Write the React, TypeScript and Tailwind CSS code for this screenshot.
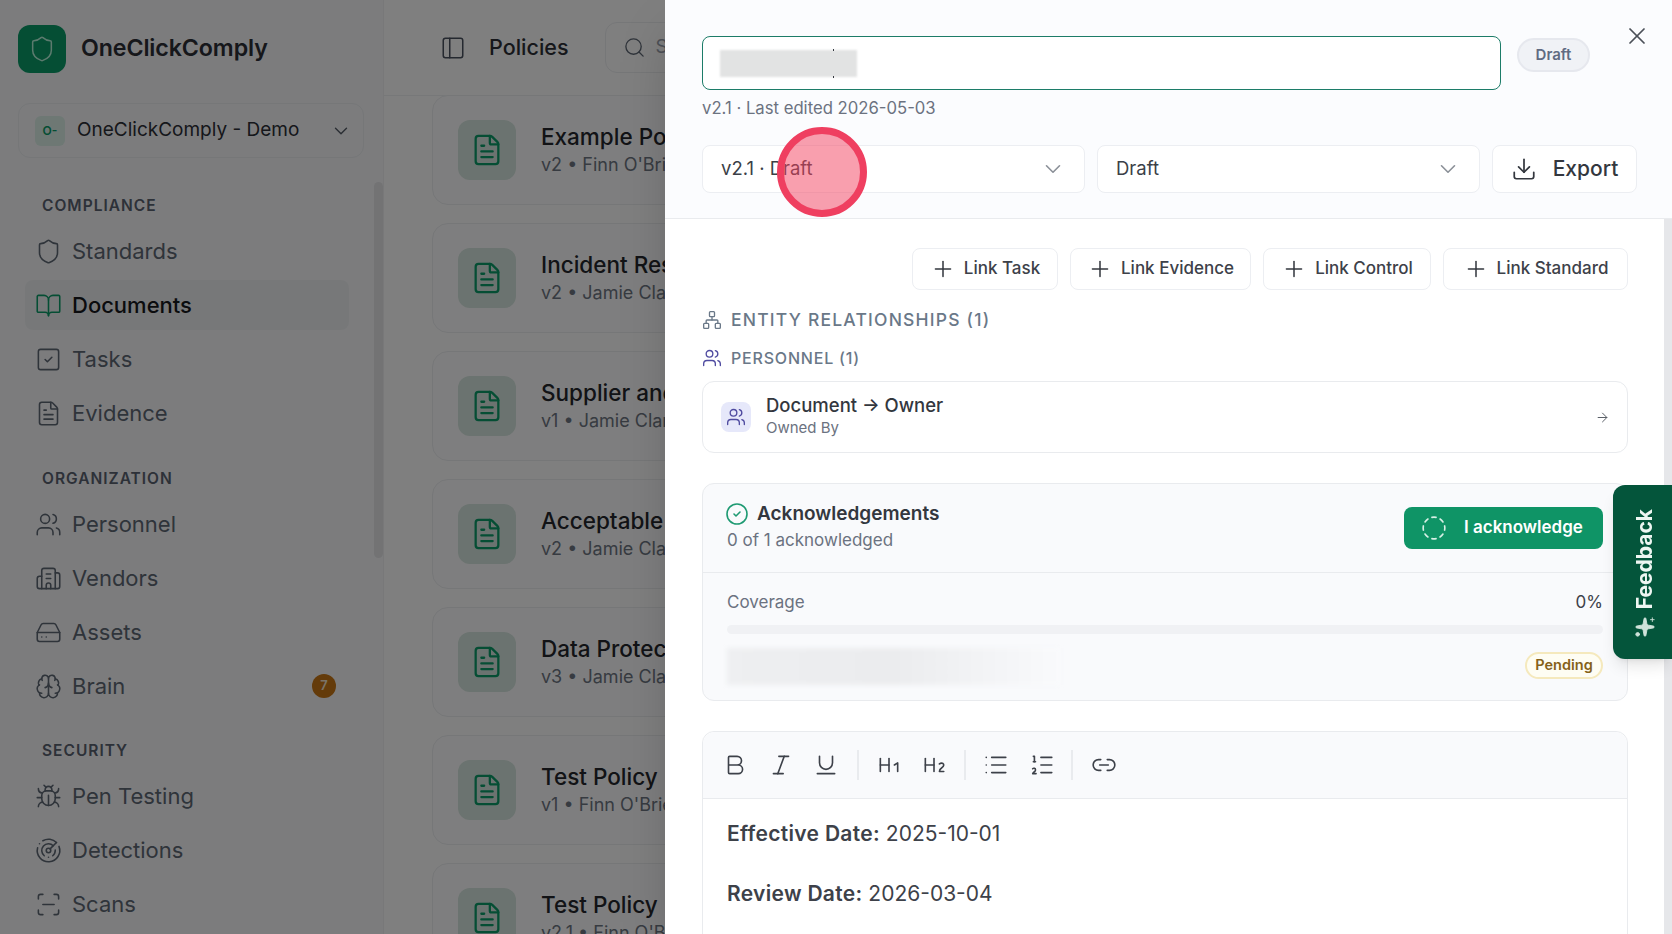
import React from "react";
import {
  ArrowRight,
  Bold,
  BookOpen,
  Bug,
  Building2,
  ChevronDown,
  CircleCheck,
  CircleDashed,
  Download,
  FileText,
  Brain,
  HardDrive,
  Heading1,
  Heading2,
  Italic,
  Link2,
  List,
  ListOrdered,
  Network,
  PanelLeft,
  Plus,
  Radar,
  ScanLine,
  Search,
  Shield,
  Sparkles,
  SquareCheck,
  Underline,
  Users,
  X,
} from "lucide-react";

const sections = [
  {
    label: "COMPLIANCE",
    labelClass: "mt-[38px]",
    items: [
      { name: "Standards", icon: Shield },
      { name: "Documents", icon: BookOpen, active: true },
      { name: "Tasks", icon: SquareCheck },
      { name: "Evidence", icon: FileText },
    ],
  },
  {
    label: "ORGANIZATION",
    labelClass: "mt-[31px]",
    items: [
      { name: "Personnel", icon: Users },
      { name: "Vendors", icon: Building2 },
      { name: "Assets", icon: HardDrive },
      { name: "Brain", icon: Brain, badge: "7" },
    ],
  },
  {
    label: "SECURITY",
    labelClass: "mt-[30px]",
    items: [
      { name: "Pen Testing", icon: Bug },
      { name: "Detections", icon: Radar },
      { name: "Scans", icon: ScanLine },
    ],
  },
];

const policies = [
  { title: "Example Policy", meta: "v2 • Finn O'Brien" },
  { title: "Incident Response Plan", meta: "v2 • Jamie Clark" },
  { title: "Supplier and Vendor Policy", meta: "v1 • Jamie Clark" },
  { title: "Acceptable Use Policy", meta: "v2 • Jamie Clark" },
  { title: "Data Protection Policy", meta: "v3 • Jamie Clark" },
  { title: "Test Policy", meta: "v1 • Finn O'Brien" },
  { title: "Test Policy", meta: "v2.1 • Finn O'Brien" },
];

const links = [
  { label: "Link Task", width: "w-[146px]" },
  { label: "Link Evidence", width: "w-[181px]" },
  { label: "Link Control", width: "w-[168px]" },
  { label: "Link Standard", width: "w-[185px]" },
];

const Sidebar: React.FC = () => (
  <aside className="relative w-[384px] shrink-0 border-r border-[#f0f1f3] bg-[#f8f9fb]">
    <div className="flex h-[96px] items-center gap-[15px] pl-[18px] pt-[1px]">
      <div className="flex h-[48px] w-[48px] items-center justify-center rounded-xl bg-[#0a9c68]">
        <Shield className="h-[28px] w-[28px] text-[#b8f5dc]" strokeWidth={1.3} />
      </div>
      <span className="text-[23.2px] font-semibold tracking-[-0.1px] text-[#2c2f36]">OneClickComply</span>
    </div>
    <div className="mx-[18px] mt-[7px] flex h-[55px] w-[346px] items-center rounded-xl border border-[#eceef1] pl-[16px] pr-[11px]">
      <div className="flex h-[30px] w-[30px] items-center justify-center rounded-md bg-[#dcf0e8] text-[12px] font-semibold text-[#0a9c68]">
        O-
      </div>
      <span className="ml-[12px] flex-1 text-[19px] text-[#2c2f36]">OneClickComply - Demo</span>
      <ChevronDown className="h-[22px] w-[22px] text-[#555b66]" strokeWidth={1.5} />
    </div>
    {sections.map((section) => (
      <div key={section.label}>
        <div
          className={`${section.labelClass} mb-[10px] flex h-[20px] items-center pl-[42px] text-[15.5px] font-semibold tracking-[1px] text-[#5a6271]`}
        >
          {section.label}
        </div>
        <div className="flex flex-col gap-[4px]">
          {section.items.map((item) => (
            <div
              key={item.name}
              className={`mx-[25px] flex h-[50px] w-[324px] items-center gap-[10px] rounded-lg px-[10px] text-[22px] ${
                item.active ? "bg-[#eff1f3] font-medium text-[#16181d]" : "text-[#5f6875]"
              }`}
            >
              <item.icon
                className={`h-[27px] w-[27px] shrink-0 ${item.active ? "text-[#0a9c68]" : "text-[#5f6875]"}`}
                strokeWidth={1.4}
              />
              <span className="flex-1">{item.name}</span>
              {item.badge && (
                <span className="mr-[3px] flex h-[24px] w-[24px] items-center justify-center rounded-full bg-[#c87614] text-[13px] font-semibold text-[#f5e6d0]">
                  {item.badge}
                </span>
              )}
            </div>
          ))}
        </div>
      </div>
    ))}
    <div className="absolute right-0 top-[182px] h-[376px] w-[9px] rounded-full bg-[#e6e7e9]" />
  </aside>
);

const PolicyList: React.FC = () => (
  <main className="flex min-w-0 flex-1 flex-col bg-white">
    <header className="flex h-[96px] shrink-0 items-center border-b border-[#eef0f2] pl-[56px]">
      <PanelLeft className="h-[26px] w-[26px] text-[#4b5260]" strokeWidth={1.4} />
      <span className="ml-[23px] text-[21.5px] font-medium text-[#2c2f36]">Policies</span>
      <div className="ml-[36px] flex h-[51px] w-[500px] items-center rounded-xl border border-[#eceef1] pl-[17px]">
        <Search className="h-[23px] w-[23px] text-[#5f6875]" strokeWidth={1.4} />
        <span className="ml-[10px] text-[19px] text-[#9aa1ac]">Search</span>
      </div>
    </header>
    <div className="-mt-[1px] flex flex-col gap-[18px] overflow-hidden pl-[48px]">
      {policies.map((policy, i) => (
        <div
          key={i}
          className="flex h-[110px] w-[1100px] shrink-0 items-center rounded-2xl border border-[#eceef1] bg-[#fdfdfe] pl-[25px]"
        >
          <div className="flex h-[60px] w-[58px] items-center justify-center rounded-xl bg-[#d6e6e0]">
            <FileText className="h-[34px] w-[34px] text-[#0a9c68]" strokeWidth={1.6} />
          </div>
          <div className="ml-[25px]">
            <div className="text-[22.5px] font-medium leading-[30px] text-[#24272d]">{policy.title}</div>
            <div className="text-[18px] leading-[26px] text-[#6e7683]">{policy.meta}</div>
          </div>
        </div>
      ))}
    </div>
  </main>
);

const SelectBox: React.FC<{ value: string }> = ({ value }) => (
  <div className="flex h-[48px] w-[383px] items-center justify-between rounded-lg border border-[#eceef2] bg-white pl-[18px] pr-[18px]">
    <span className="text-[18.5px] text-[#3b3f47]">{value}</span>
    <ChevronDown className="h-[26px] w-[26px] text-[#8b9098]" strokeWidth={1.5} />
  </div>
);

const DrawerHeader: React.FC = () => (
  <div className="relative h-[219px] shrink-0 border-b border-[#e9ebee] bg-[#fbfcfe] pl-[37px] pt-[36px]">
    <div className="flex items-start">
      <div className="flex h-[54px] w-[799px] items-center rounded-lg border border-[#1c7c68] bg-white pl-[17px]">
        <div className="relative h-[27px] w-[137px]">
          <div className="h-full w-full bg-[#e2e3e3] blur-[1px]" />
          <div className="absolute -top-[1px] left-[113px] h-[2px] w-[1px] bg-[#33373e]" />
          <div className="absolute -bottom-[1px] left-[113px] h-[2px] w-[1px] bg-[#33373e]" />
        </div>
      </div>
      <div className="ml-[16px] mt-[2px] flex h-[34px] w-[73px] items-center justify-center rounded-full border-2 border-[#e6e8ee] bg-[#f0f2f6] text-[15px] font-semibold text-[#5f6b82]">
        Draft
      </div>
    </div>
    <div className="mt-[7px] text-[16.7px] leading-[22px] text-[#6b7280]">v2.1 · Last edited 2026-05-03</div>
    <div className="mt-[26px] flex gap-[12px]">
      <SelectBox value="v2.1 · Draft" />
      <SelectBox value="Draft" />
      <div className="flex h-[48px] w-[145px] items-center justify-center gap-[16px] rounded-lg border border-[#eceef2] bg-white">
        <Download className="h-[26px] w-[26px] text-[#33373e]" strokeWidth={1.6} />
        <span className="text-[21px] font-medium text-[#33373e]">Export</span>
      </div>
    </div>
    <X className="absolute left-[958px] top-[22px] h-[28px] w-[28px] text-[#4b5058]" strokeWidth={1.5} />
  </div>
);

const Relationships: React.FC = () => (
  <>
    <div className="flex justify-end gap-[12px]">
      {links.map((link) => (
        <div
          key={link.label}
          className={`${link.width} flex h-[42px] items-center justify-center gap-[8px] rounded-lg border border-[#eceef2] text-[17px] font-medium text-[#3d4149]`}
        >
          <Plus className="h-[26px] w-[26px] text-[#33373e]" strokeWidth={1.4} />
          {link.label}
        </div>
      ))}
    </div>
    <div className="mt-[20px] flex h-[20px] items-center gap-[9px] text-[17.5px] font-medium tracking-[1.2px] text-[#6a7888]">
      <Network className="h-[20px] w-[20px]" strokeWidth={1.6} />
      ENTITY RELATIONSHIPS (1)
    </div>
    <div className="mt-[18px] flex h-[20px] items-center gap-[9px] text-[16px] font-medium tracking-[0.8px] text-[#6a7888]">
      <Users className="h-[20px] w-[20px] text-[#4f4ba0]" strokeWidth={1.6} />
      PERSONNEL (1)
    </div>
    <div className="mt-[13px] flex h-[72px] items-center rounded-xl border border-[#e9ebee] pl-[18px] pr-[17px]">
      <div className="flex h-[30px] w-[30px] items-center justify-center rounded-lg bg-[#e6e8fa]">
        <Users className="h-[20px] w-[20px] text-[#4f4ba0]" strokeWidth={1.6} />
      </div>
      <div className="ml-[15px] -mt-[3px] flex-1">
        <div className="text-[18.5px] font-medium leading-[25px] text-[#33373e]">Document → Owner</div>
        <div className="text-[15px] leading-[20px] text-[#6b7280]">Owned By</div>
      </div>
      <ArrowRight className="h-[15px] w-[15px] text-[#5b6068]" strokeWidth={1.6} />
    </div>
  </>
);

const Acknowledgements: React.FC = () => (
  <div className="mt-[30px] h-[218px] rounded-xl border border-[#e9ebee] bg-[#f9fafc]">
    <div className="flex h-[89px] items-center justify-between border-b border-[#e9ebee] pl-[22px] pr-[24px]">
      <div className="-mt-[2px]">
        <div className="flex items-center gap-[8px]">
          <CircleCheck className="h-[24px] w-[24px] text-[#1e9a72]" strokeWidth={1.6} />
          <span className="text-[19px] font-semibold leading-[26px] text-[#33373e]">Acknowledgements</span>
        </div>
        <div className="pl-[2px] text-[17px] leading-[26px] text-[#6b7280]">0 of 1 acknowledged</div>
      </div>
      <div className="flex h-[42px] w-[199px] items-center gap-[17px] rounded-lg bg-[#0f9466] pl-[17px]">
        <CircleDashed className="h-[26px] w-[26px] text-[#d8f0e6]" strokeWidth={1.5} />
        <span className="text-[17px] font-semibold text-white">I acknowledge</span>
      </div>
    </div>
    <div className="px-[24px]">
      <div className="mt-[19px] flex h-[22px] items-center justify-between text-[17px]">
        <span className="text-[#6b7280]">Coverage</span>
        <span className="text-[#3d4149]">0%</span>
      </div>
      <div className="mt-[11px] h-[9px] rounded-full bg-[#f0f1f4]" />
      <div className="mt-[14px] flex items-center justify-between">
        <div className="h-[37px] w-[333px] bg-linear-to-r from-[#eeeff1] via-[#ebecee] to-[#f9fafc] blur-[2px]" />
        <span className="-mt-[3px] flex h-[27px] w-[78px] items-center justify-center rounded-full border-2 border-[#f5e9bd] bg-[#fefdf3] text-[14.5px] font-semibold text-[#85611a]">
          Pending
        </span>
      </div>
    </div>
  </div>
);

const Editor: React.FC = () => (
  <div className="mt-[30px] rounded-t-xl border border-[#e9ebee] pb-[60px]">
    <div className="flex h-[67px] items-center rounded-t-xl border-b border-[#e9ebee] bg-[#f9fafc] pl-[19px] text-[#3d4149]">
      <Bold className="h-[26px] w-[26px]" strokeWidth={1.5} />
      <Italic className="ml-[20px] h-[26px] w-[26px]" strokeWidth={1.5} />
      <Underline className="ml-[19px] h-[26px] w-[26px]" strokeWidth={1.5} />
      <div className="ml-[18px] h-[30px] w-[2px] bg-[#e9ebee]" />
      <Heading1 className="ml-[17px] h-[26px] w-[26px]" strokeWidth={1.5} />
      <Heading2 className="ml-[19px] h-[26px] w-[26px]" strokeWidth={1.5} />
      <div className="ml-[17px] h-[30px] w-[2px] bg-[#e9ebee]" />
      <List className="ml-[17px] h-[26px] w-[26px]" strokeWidth={1.5} />
      <ListOrdered className="ml-[20px] h-[26px] w-[26px]" strokeWidth={1.5} />
      <div className="ml-[16px] h-[30px] w-[2px] bg-[#e9ebee]" />
      <Link2 className="ml-[18px] h-[26px] w-[26px]" strokeWidth={1.5} />
    </div>
    <div className="px-[24px] pt-[19px] text-[21px] leading-[32px] text-[#3d4149]">
      <p>
        <b className="font-semibold tracking-[0.3px]">Effective Date:</b> 2025-10-01
      </p>
      <p className="mt-[28px]">
        <b className="font-semibold tracking-[0.3px]">Review Date:</b> 2026-03-04
      </p>
    </div>
  </div>
);

const App: React.FC = () => {
  return (
    <div className="relative flex h-[934px] w-[1672px] overflow-hidden bg-white [font-family:Inter,sans-serif]">
      <Sidebar />
      <PolicyList />
      <div className="absolute inset-0 bg-black/50" />

      <div className="absolute bottom-0 right-0 top-0 flex w-[1007px] flex-col bg-white shadow-2xl">
        <DrawerHeader />
        <div className="relative flex-1 overflow-hidden pl-[37px] pr-[44px] pt-[29px]">
          <Relationships />
          <Acknowledgements />
          <Editor />
          <div className="absolute bottom-0 right-0 top-0 w-[8px] bg-[#e6e7ea]" />
        </div>
      </div>

      {/* click marker from the recording */}
      <div className="absolute left-[777px] top-[127px] h-[90px] w-[90px] rounded-full border-[7px] border-[#ef3f60] bg-[#f43f5e]/50" />

      <div className="absolute right-0 top-[485px] flex h-[174px] w-[59px] flex-col items-center justify-center gap-[7px] rounded-l-xl bg-[#04553b] pl-[4px] pt-[3px] shadow-lg">
        <span className="rotate-180 text-[21px] font-bold text-[#eef6f2] [writing-mode:vertical-rl]">Feedback</span>
        <Sparkles className="h-[22px] w-[22px] text-[#cfe3da]" fill="#cfe3da" strokeWidth={1} />
      </div>
    </div>
  );
};

export default App;
